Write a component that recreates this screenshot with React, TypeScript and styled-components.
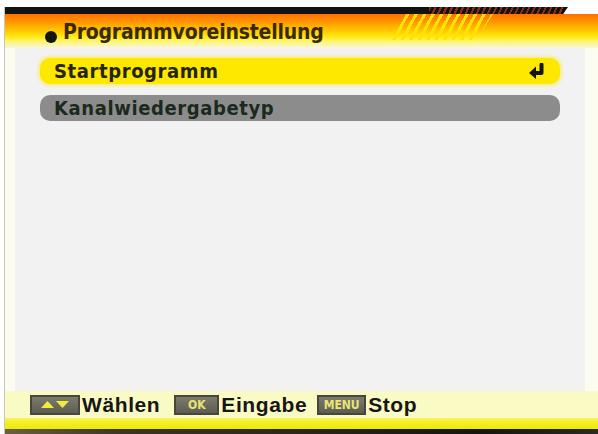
import styled, { createGlobalStyle } from "styled-components";

const GlobalStyle = createGlobalStyle`
  html, body {
    margin: 0;
    padding: 0;
    background: #ffffff;
    overflow: hidden;
  }
`;

const menuItems = [
  { label: "Startprogramm", active: true },
  { label: "Kanalwiedergabetyp", active: false },
];

export default function App() {
  return (
    <>
      <GlobalStyle />
      <Screen>
        <Frame>
          <BlackBar>
            <BarFill>
              <BarHatch />
            </BarFill>
          </BlackBar>
          <TitleBar>
            <Bullet />
            <Title>Programmvoreinstellung</Title>
            <Stripes />
          </TitleBar>
          <Panel>
            {menuItems.map((item) => (
              <MenuRow key={item.label} $active={item.active}>
                <span>{item.label}</span>
                {item.active && (
                  <svg width="18" height="17" viewBox="0 0 18 17">
                    <path d="M13.5 1.5 L13.5 10 L6 10" fill="none" stroke="#141410" strokeWidth="4" strokeLinejoin="round" strokeLinecap="round" />
                    <path d="M1 10 L8 3.5 L8 16 Z" fill="#141410" />
                  </svg>
                )}
              </MenuRow>
            ))}
          </Panel>
          <Footer>
            <KeyBox $width={50}>
              <svg width="30" height="9" viewBox="0 0 30 9">
                <path d="M1 8 L7.5 1 L14 8 Z" fill="#f2ea40" />
                <path d="M16 1 L29 1 L22.5 8 Z" fill="#f2ea40" />
              </svg>
            </KeyBox>
            <KeyLabel $gap={14}>Wählen</KeyLabel>
            <KeyBox $width={45}>OK</KeyBox>
            <KeyLabel $gap={10}>Eingabe</KeyLabel>
            <KeyBox $width={49}>MENU</KeyBox>
            <KeyLabel $gap={0}>Stop</KeyLabel>
          </Footer>
          <YellowBand />
          <DarkBand />
        </Frame>
      </Screen>
    </>
  );
}

const Screen = styled.div`
  width: 598px;
  height: 434px;
  padding-top: 7px;
  box-sizing: border-box;
  display: flex;
  flex-direction: column;
  background: #ffffff;
`;

const Frame = styled.div`
  flex: 1;
  margin-left: 4px;
  border-left: 1px solid #c8c8b6;
  display: flex;
  flex-direction: column;
  background: #fcfcf0;
`;

const BlackBar = styled.div`
  height: 7px;
  display: flex;
  background: #ffffff;
`;

const BarFill = styled.div`
  width: 563px;
  background: #121210;
  display: flex;
  clip-path: polygon(0 0, 100% 0, calc(100% - 5px) 100%, 0 100%);
`;

const BarHatch = styled.div`
  margin-left: auto;
  margin-right: 3px;
  width: 136px;
  background: repeating-linear-gradient(115deg, #8c2c12 0 2px, #121210 2px 5px);
`;

const TitleBar = styled.div`
  height: 34px;
  display: flex;
  align-items: flex-start;
  padding-left: 40px;
  background: linear-gradient(
    180deg,
    #ff7000 0%,
    #ff9400 22%,
    #ffc000 45%,
    #ffe810 66%,
    #fff46a 80%,
    #f6f6e4 100%
  );
`;

const Bullet = styled.div`
  width: 12px;
  height: 12px;
  border-radius: 50%;
  background: #161410;
  margin-top: 17px;
  margin-right: 6px;
  flex: none;
`;

const Title = styled.div`
  font-family: "DejaVu Sans Condensed", "Liberation Sans Narrow", "DejaVu Sans", sans-serif;
  font-stretch: condensed;
  font-weight: bold;
  font-size: 21px;
  line-height: 36px;
  letter-spacing: -0.2px;
  color: #3a2a08;
`;

const Stripes = styled.div`
  margin-left: auto;
  margin-right: 105px;
  width: 104px;
  height: 26px;
  background: repeating-linear-gradient(118deg, #ffe400 0 3px, transparent 3px 7.5px);
  clip-path: polygon(16% 0, 100% 0, 84% 100%, 0 100%);
`;

const Panel = styled.div`
  flex: 1;
  margin: 0 13px 0 10px;
  padding: 10px 25px;
  background: #f2f2f2;
  display: flex;
  flex-direction: column;
  gap: 11px;
`;

const MenuRow = styled.div<{ $active: boolean }>`
  height: 26px;
  display: flex;
  align-items: center;
  justify-content: space-between;
  padding: 0 14px 0 14px;
  border-radius: 10px;
  background: ${(p) => (p.$active ? "#ffe800" : "#8c8c8c")};
  box-shadow: ${(p) => (p.$active ? "0 0 3px 2px rgba(255, 232, 0, 0.45)" : "none")};
  color: ${(p) => (p.$active ? "#26240c" : "#1a2a1c")};
  font-family: "DejaVu Sans Condensed", "Liberation Sans Narrow", "DejaVu Sans", sans-serif;
  font-stretch: condensed;
  font-weight: bold;
  font-size: 20px;
  letter-spacing: 0.6px;

  svg {
    flex: none;
  }
`;

const Footer = styled.div`
  height: 27px;
  display: flex;
  align-items: center;
  padding-left: 25px;
  background: #fafac4;
`;

const KeyBox = styled.div<{ $width: number }>`
  width: ${(p) => p.$width}px;
  height: 20px;
  box-sizing: border-box;
  border: 2px solid #46463e;
  background: linear-gradient(180deg, #7c7c6c 0%, #5c5c52 100%);
  display: flex;
  align-items: center;
  justify-content: center;
  color: #ece472;
  font-family: "DejaVu Sans Condensed", "Liberation Sans Narrow", "DejaVu Sans", sans-serif;
  font-stretch: condensed;
  font-weight: bold;
  font-size: 12px;
  flex: none;
`;

const KeyLabel = styled.span<{ $gap: number }>`
  margin: 0 ${(p) => p.$gap}px 0 2px;
  font-family: "Liberation Sans", Arial, sans-serif;
  font-weight: bold;
  font-size: 21px;
  letter-spacing: 0.6px;
  color: #161614;
`;

const YellowBand = styled.div`
  height: 11px;
  background: linear-gradient(180deg, #f8f260 0%, #f4ee18 50%, #eee812 100%);
`;

const DarkBand = styled.div`
  height: 5px;
  background: linear-gradient(90deg, #6a6040 0%, #3a3422 20%, #2a261a 50%, #161410 80%, #2a2a20 100%);
`;
